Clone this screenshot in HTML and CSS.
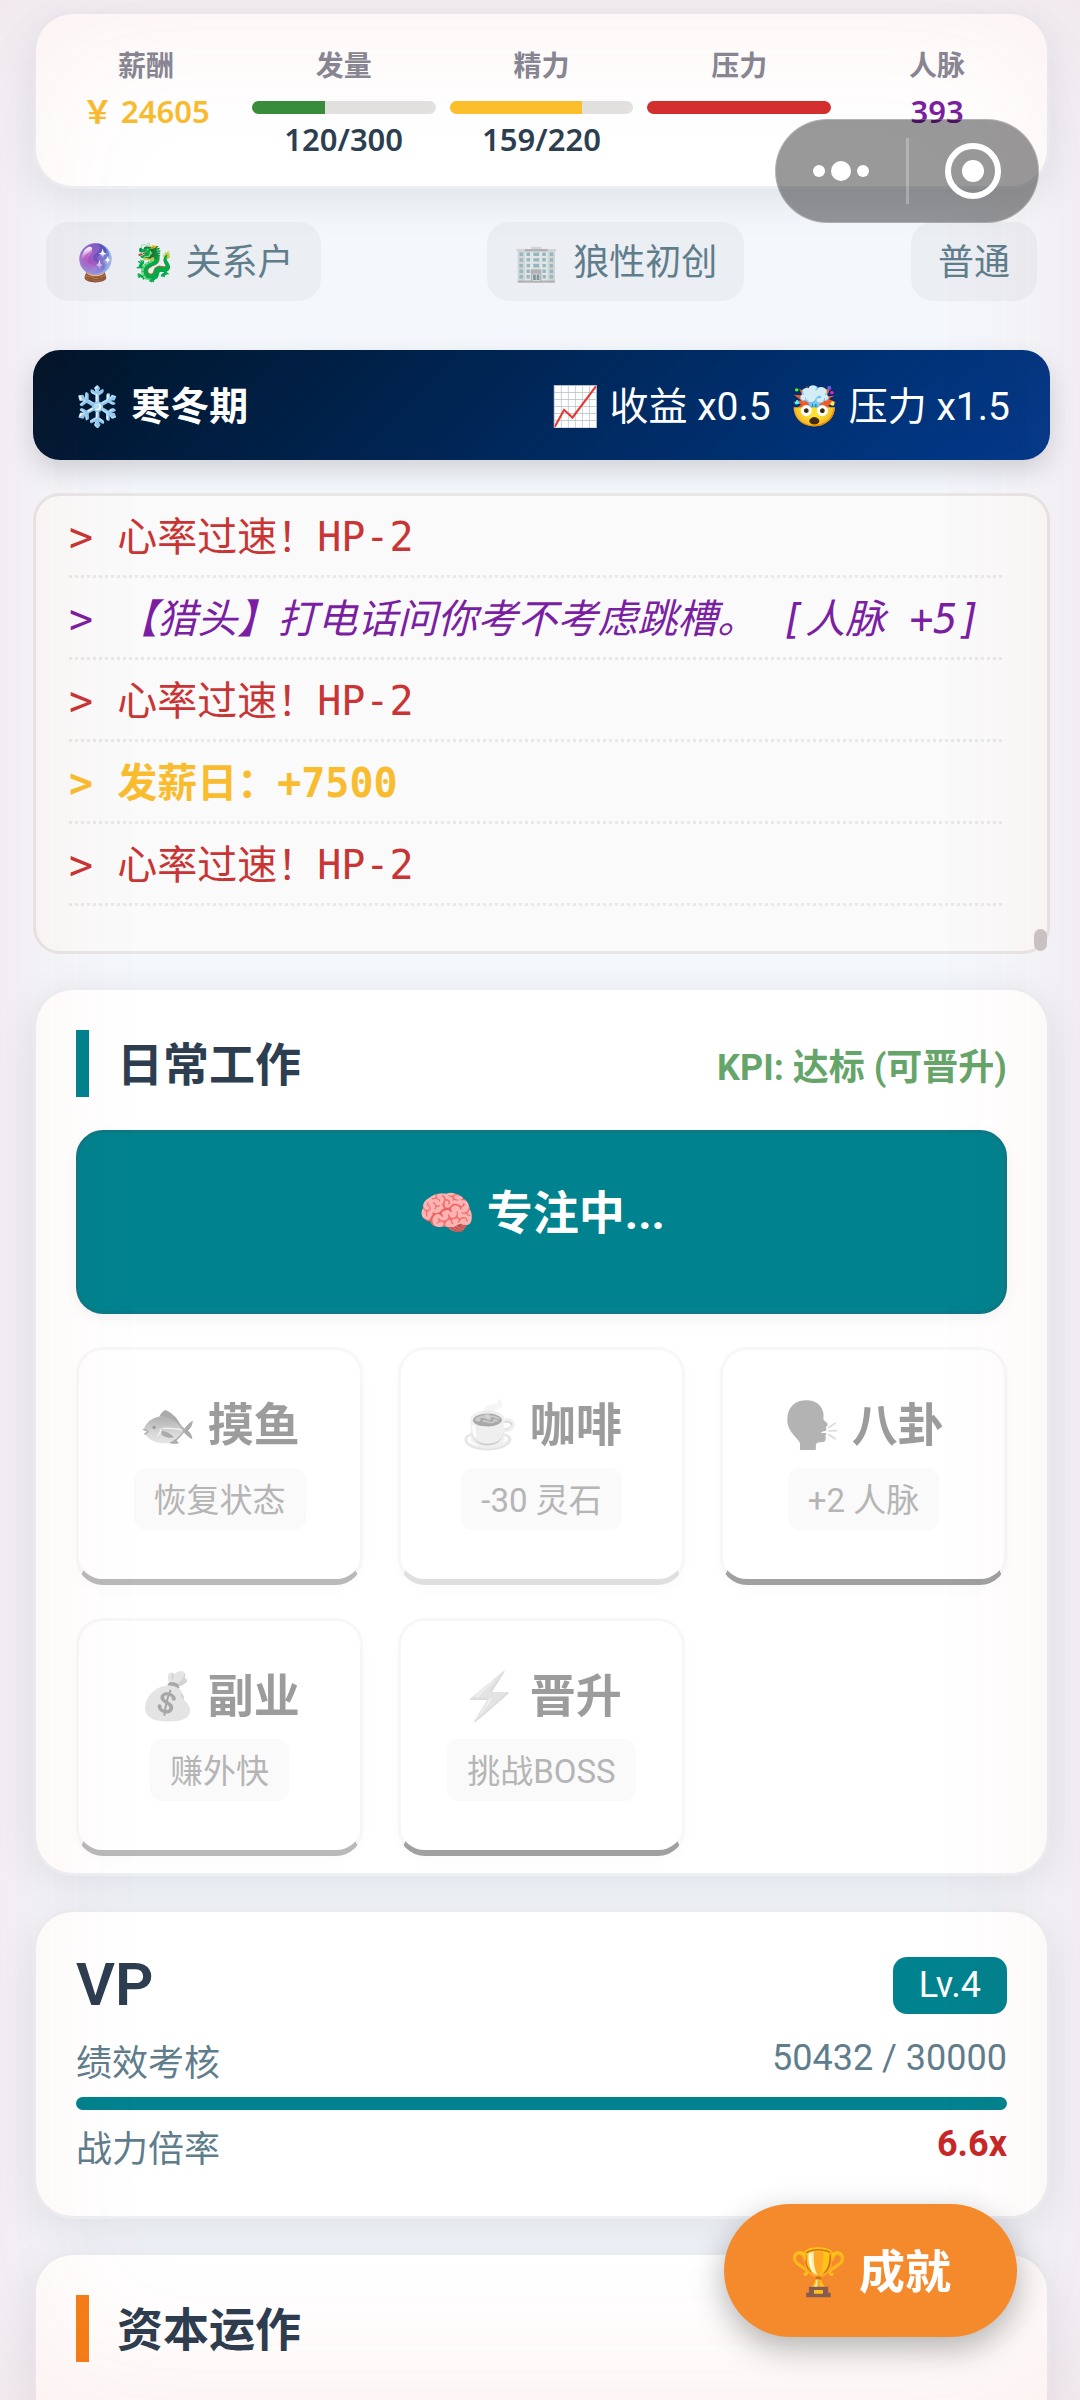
FILE: index.html
```html
<!DOCTYPE html>
<html lang="zh-CN">
<head>
<meta charset="utf-8">
<meta name="viewport" content="width=device-width, initial-scale=1">
<title>日常工作</title>
<link rel="stylesheet" href="styles.css">
</head>
<body>
<div class="capsule">
  <button class="capsule-btn" type="button" aria-label="更多">
    <svg width="58" height="24" viewBox="0 0 58 24" fill="#fff"><circle cx="7" cy="12" r="6"/><circle cx="29" cy="12" r="10"/><circle cx="51" cy="12" r="6"/></svg>
  </button>
  <span class="capsule-line"></span>
  <button class="capsule-btn" type="button" aria-label="关闭">
    <svg width="56" height="56" viewBox="0 0 56 56"><circle cx="28" cy="28" r="25" fill="none" stroke="#fff" stroke-width="6"/><circle cx="28" cy="28" r="11" fill="#fff"/></svg>
  </button>
</div>

<main class="app">
  <header class="card stats">
    <div class="stat"><span class="stat-label">薪酬</span><span class="stat-value gold">￥ 24605</span></div>
    <div class="stat"><span class="stat-label">发量</span><div class="bar"><div class="fill green" style="width:40%"></div></div><span class="stat-value">120/300</span></div>
    <div class="stat"><span class="stat-label">精力</span><div class="bar"><div class="fill amber" style="width:72%"></div></div><span class="stat-value">159/220</span></div>
    <div class="stat"><span class="stat-label">压力</span><div class="bar"><div class="fill red" style="width:100%"></div></div></div>
    <div class="stat"><span class="stat-label">人脉</span><span class="stat-value purple">393</span></div>
  </header>

  <div class="tags">
    <span class="tag"><span>🔮</span><span>🐉 关系户</span></span>
    <span class="tag"><span class="dim">🏢</span> <span>狼性初创</span></span>
    <span class="tag">普通</span>
  </div>

  <section class="banner">
    <strong>❄️ 寒冬期</strong>
    <span class="effects"><span>📈 收益 x0.5</span><span>🤯 压力 x1.5</span></span>
  </section>

  <section class="log">
    <p class="entry danger">&gt; 心率过速！HP-2</p>
    <p class="entry event">&gt; 【猎头】打电话问你考不考虑跳槽。 [人脉 +5]</p>
    <p class="entry danger">&gt; 心率过速！HP-2</p>
    <p class="entry payday">&gt; 发薪日：+7500</p>
    <p class="entry danger">&gt; 心率过速！HP-2</p>
    <span class="thumb"></span>
  </section>

  <section class="card panel work">
    <div class="panel-head"><h2 class="panel-title">日常工作</h2><span class="kpi">KPI: 达标 (可晋升)</span></div>
    <button class="focus" type="button">🧠 专注中...</button>
    <div class="actions">
      <button class="action mid" type="button" disabled><span class="action-name">🐟 摸鱼</span><span class="chip">恢复状态</span></button>
      <button class="action light" type="button" disabled><span class="action-name">☕ 咖啡</span><span class="chip">-30 灵石</span></button>
      <button class="action dark" type="button" disabled><span class="action-name">🗣️ 八卦</span><span class="chip">+2 人脉</span></button>
      <button class="action mid" type="button" disabled><span class="action-name">💰 副业</span><span class="chip">赚外快</span></button>
      <button class="action dark" type="button" disabled><span class="action-name">⚡ 晋升</span><span class="chip">挑战BOSS</span></button>
    </div>
  </section>

  <section class="card panel rank">
    <div class="rank-head"><h2 class="rank-title">VP</h2><span class="level">Lv.4</span></div>
    <div class="row"><span class="row-label">绩效考核</span><span class="row-value">50432 / 30000</span></div>
    <div class="bar"><div class="fill teal" style="width:100%"></div></div>
    <div class="row"><span class="row-label">战力倍率</span><span class="row-value power">6.6x</span></div>
  </section>

  <section class="card panel capital">
    <div class="panel-head"><h2 class="panel-title orange">资本运作</h2></div>
  </section>
</main>

<button class="fab" type="button">🏆 成就</button>
</body>
</html>
```

FILE: styles.css
```css
* { box-sizing: border-box; }

body {
  margin: 0;
  color: #2c3e50;
  font-family: Roboto, "Noto Sans CJK SC", "Noto Color Emoji", sans-serif;
  background: #f4f7fc;
}

body::after {
  content: "";
  position: fixed;
  inset: 0;
  z-index: 3;
  box-shadow: inset 0 0 160px rgba(211, 47, 47, 0.09);
  pointer-events: none;
}

h2, p { margin: 0; }
button { font-family: inherit; }

.app {
  display: flex;
  flex-direction: column;
  gap: 33px;
  min-height: 100vh;
  padding: 11px 30px 0 33px;
}

.card {
  border: 3px solid rgba(0, 0, 0, 0.03);
  border-radius: 40px;
  background: rgba(255, 255, 255, 0.95);
  background-clip: padding-box;
  box-shadow: 0 11px 44px rgba(0, 0, 0, 0.09);
}

/* Status header */
.stats {
  display: grid;
  grid-template-columns: repeat(5, 1fr);
  gap: 14px;
  min-height: 178px;
  padding: 32px 18px 20px;
}
.stat { display: flex; flex-direction: column; align-items: center; }
.stat-label {
  margin-bottom: 13px;
  color: #868894;
  font-size: 28px;
  font-weight: 700;
  line-height: 42px;
}
.stat-value {
  font-family: "Noto Sans", "Noto Sans CJK SC", sans-serif;
  font-size: 31px;
  font-weight: 600;
  line-height: 50px;
  white-space: nowrap;
}
.stat > .stat-label + .stat-value { line-height: 20px; }

.bar {
  width: 100%;
  height: 13px;
  overflow: hidden;
  border-radius: 7px;
  background: #e2e2e1;
}
.fill { height: 100%; }
.green { background: #388e3c; }
.amber { background: #fbc02d; }
.red { background: #d32f2f; }
.teal { background: #00838f; }
.gold { color: #f9bc2f; }
.purple { color: #7b1fa2; }

/* Mini-program capsule */
.capsule {
  position: fixed;
  top: 119px;
  right: 41px;
  z-index: 5;
  display: flex;
  align-items: center;
  width: 264px;
  height: 104px;
  border: 1px solid rgba(255, 255, 255, 0.25);
  border-radius: 52px;
  background: rgba(0, 0, 0, 0.4);
}
.capsule-btn {
  display: flex;
  flex: 1;
  align-items: center;
  justify-content: center;
  padding: 0;
  border: 0;
  background: none;
}
.capsule-line { width: 3px; height: 66px; background: rgba(255, 255, 255, 0.25); }

/* Tags */
.tags {
  display: flex;
  justify-content: space-between;
  margin-bottom: 16px;
  padding: 0 13px;
}
.tag {
  display: flex;
  gap: 14px;
  padding: 4px 27px 0;
  border-radius: 22px;
  background: rgba(0, 0, 0, 0.035);
  color: #607d8b;
  font-size: 36px;
  line-height: 75px;
}
.dim { opacity: 0.7; }

/* Season banner */
.banner {
  display: flex;
  align-items: center;
  justify-content: space-between;
  padding: 4px 40px 0 40px;
  border-radius: 27px;
  background: linear-gradient(135deg, #001529, #003a8c);
  box-shadow: 0 11px 27px rgba(0, 0, 0, 0.15);
  color: #fff;
  font-size: 39px;
  line-height: 106px;
}
.effects { display: flex; gap: 20px; }

/* Event log */
.log {
  position: relative;
  padding: 0 45px 45px 33px;
  border: 3px solid #e8e6e7;
  border-radius: 27px;
  background: #fafafa;
}
.entry {
  padding-top: 3px;
  border-bottom: 3px dotted #e8e8e8;
  font-family: "DejaVu Sans Mono", "Noto Sans CJK SC", monospace;
  font-size: 40px;
  line-height: 76px;
  white-space: pre-wrap;
}
.danger { color: #c93434; }
.event { color: #7b1fa2; font-style: italic; }
.payday { color: #f9bc2f; font-weight: 700; }
.thumb {
  position: absolute;
  right: 0;
  bottom: 0;
  width: 13px;
  height: 22px;
  border-radius: 7px;
  background: #c8c6c6;
}

/* Panels */
.panel { padding: 40px; }
.panel-head {
  display: flex;
  align-items: center;
  justify-content: space-between;
}
.panel-title {
  padding: 4px 0 0 28px;
  border-left: 13px solid #00838f;
  font-size: 46px;
  line-height: 63px;
}
.orange { border-color: #f57f17; }
.kpi { color: #66a56a; font-size: 36px; font-weight: 700; }

.work { padding-bottom: 17px; }
.focus {
  width: 100%;
  margin: 33px 0;
  padding: 47px 0 64px;
  border: 3px solid #0b7a85;
  border-radius: 27px;
  background: #00838f;
  box-shadow: 0 5px 14px rgba(0, 0, 0, 0.05);
  color: #fff;
  font-size: 46px;
  font-weight: 700;
  line-height: 67px;
}
.actions {
  display: grid;
  grid-template-columns: repeat(3, 1fr);
  gap: 33px 35px;
}
.action {
  display: flex;
  flex-direction: column;
  align-items: center;
  gap: 9px;
  padding: 42px 0 49px;
  border: 3px solid #f7f7f7;
  border-bottom: 6px solid #b9b9b9;
  border-radius: 27px;
  background: rgba(255, 255, 255, 0.8);
  box-shadow: 0 5px 14px rgba(0, 0, 0, 0.02);
}
.light { border-bottom-color: #dfdfdf; }
.dark { border-bottom-color: #a0a0a0; }
.action-name {
  color: #2c3e50;
  filter: grayscale(1);
  font-size: 46px;
  font-weight: 700;
  line-height: 67px;
  opacity: 0.5;
}
.chip {
  padding: 4px 20px 0;
  border-radius: 12px;
  background: #fafafa;
  color: #b5b5b5;
  font-size: 33px;
  line-height: 58px;
}

/* Rank */
.rank { padding-bottom: 33px; }
.rank-head {
  display: flex;
  align-items: center;
  justify-content: space-between;
  margin-bottom: 13px;
}
.rank-title { font-size: 60px; font-weight: 600; line-height: 66px; }
.level {
  padding: 0 26px;
  border-radius: 14px;
  background: #00838f;
  color: #fff;
  font-size: 36px;
  line-height: 57px;
}
.row {
  display: flex;
  justify-content: space-between;
  color: #607d8b;
  font-size: 36px;
}
.row-label { line-height: 66px; }
.row-value { line-height: 54px; }
.power { color: #c62828; font-weight: 700; }
.rank .bar { margin: 0 0 7px; }

.capital {
  flex: 1;
  border-bottom: 0;
  border-radius: 40px 40px 0 0;
}

.fab {
  position: fixed;
  right: 63px;
  bottom: 63px;
  z-index: 4;
  padding: 4px 66px 0;
  border: 0;
  border-radius: 67px;
  background: #f58a2c;
  box-shadow: 0 11px 33px rgba(0, 0, 0, 0.3);
  color: #fff;
  font-size: 46px;
  font-weight: 700;
  line-height: 129px;
}
```
